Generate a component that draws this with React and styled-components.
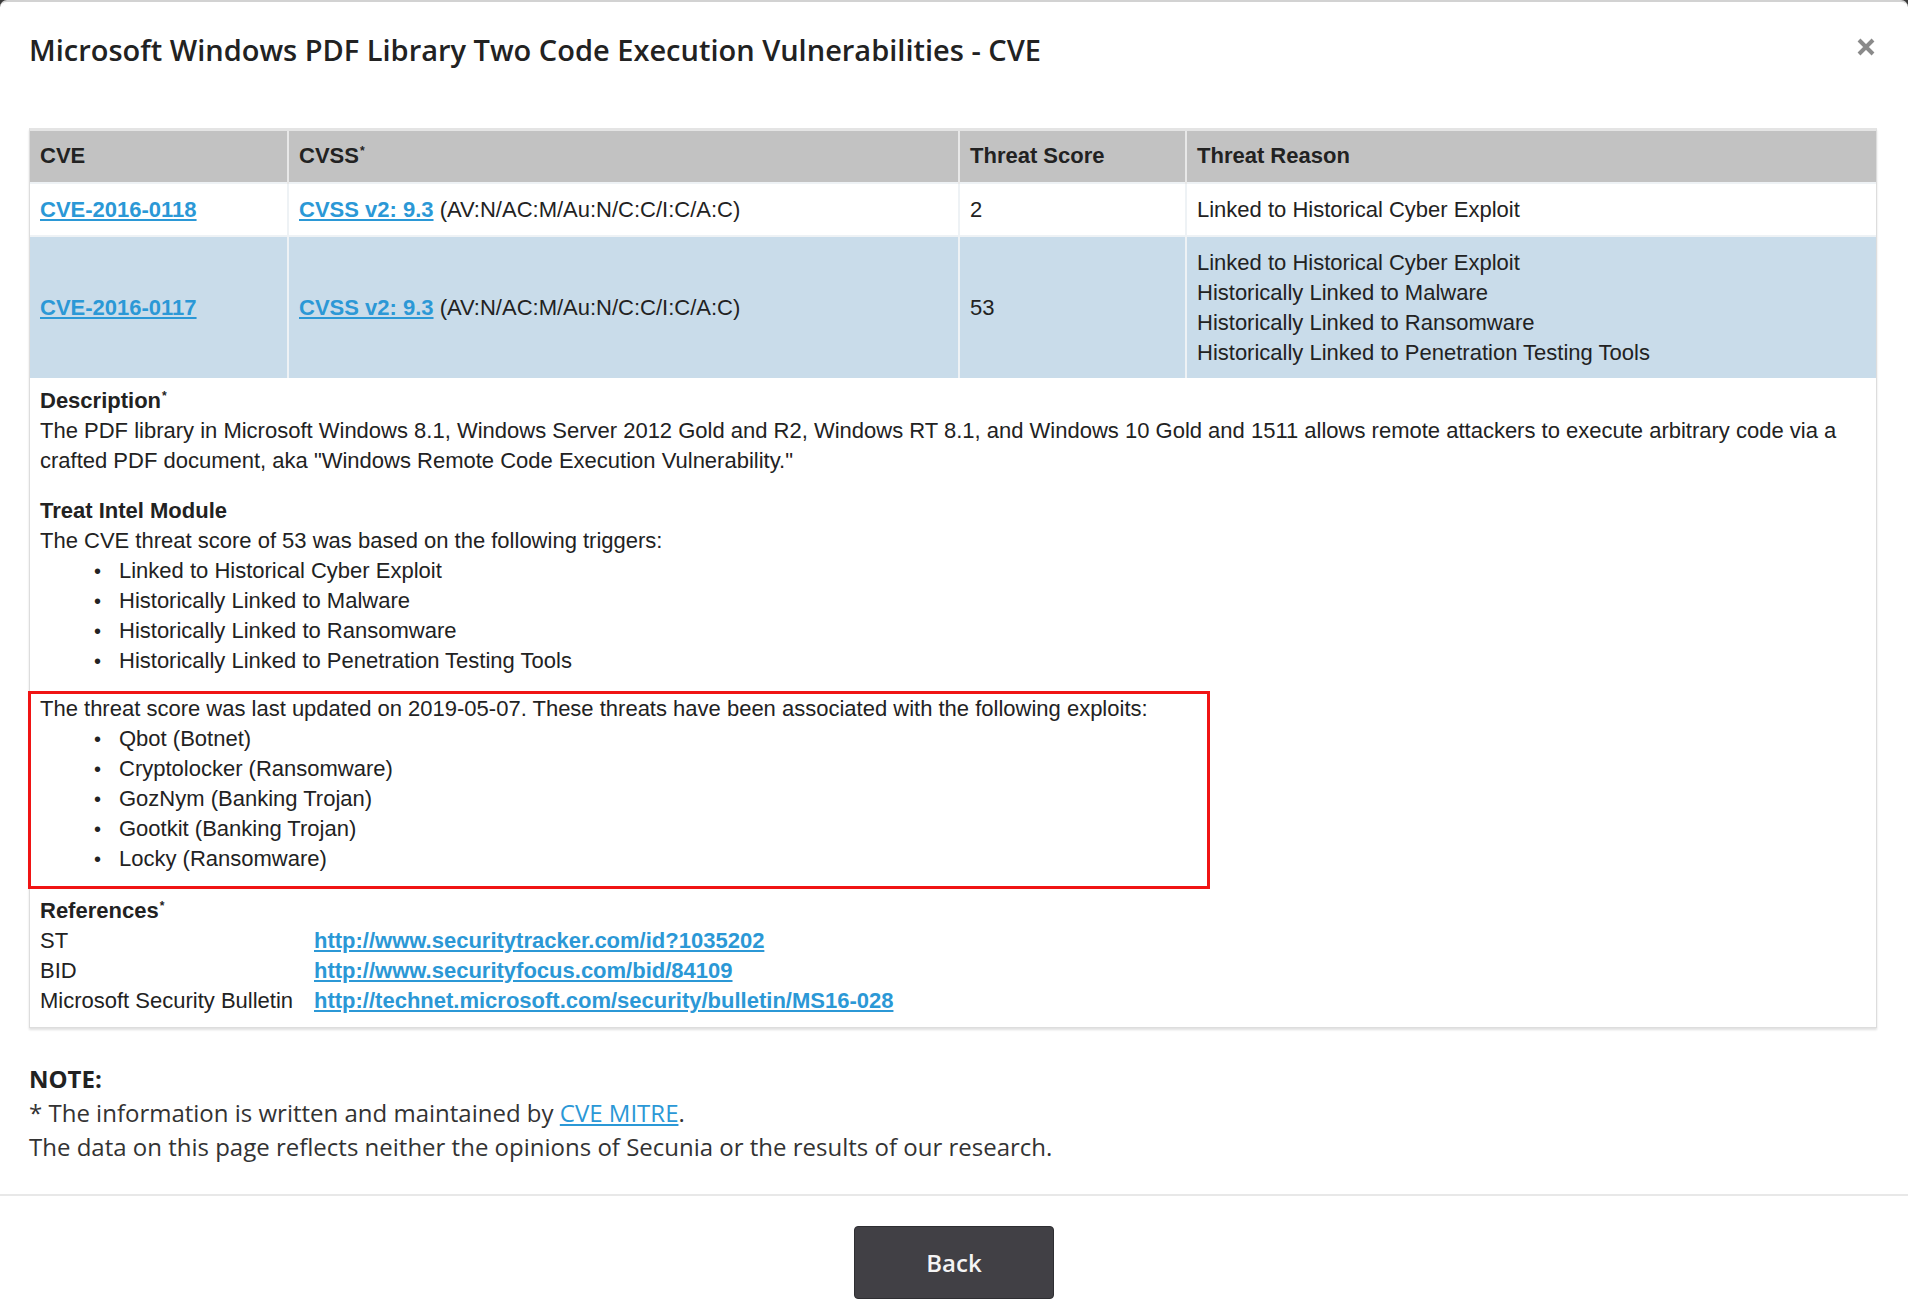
import styled, { createGlobalStyle } from "styled-components";

const GlobalStyle = createGlobalStyle`
    body {
        margin: 0;
        background: #3a3a3a;
    }
`

const rows = [
    {
        cve: "CVE-2016-0118",
        vector: "(AV:N/AC:M/Au:N/C:C/I:C/A:C)",
        score: "2",
        reasons: ["Linked to Historical Cyber Exploit"],
    },
    {
        cve: "CVE-2016-0117",
        vector: "(AV:N/AC:M/Au:N/C:C/I:C/A:C)",
        score: "53",
        reasons: [
            "Linked to Historical Cyber Exploit",
            "Historically Linked to Malware",
            "Historically Linked to Ransomware",
            "Historically Linked to Penetration Testing Tools",
        ],
        highlight: true,
    },
];

const triggers = [
    "Linked to Historical Cyber Exploit",
    "Historically Linked to Malware",
    "Historically Linked to Ransomware",
    "Historically Linked to Penetration Testing Tools",
];

const exploits = [
    "Qbot (Botnet)",
    "Cryptolocker (Ransomware)",
    "GozNym (Banking Trojan)",
    "Gootkit (Banking Trojan)",
    "Locky (Ransomware)",
];

const references = [
    { source: "ST", url: "http://www.securitytracker.com/id?1035202" },
    { source: "BID", url: "http://www.securityfocus.com/bid/84109" },
    { source: "Microsoft Security Bulletin", url: "http://technet.microsoft.com/security/bulletin/MS16-028" },
];

export default function App(){
    return(
        <>
            <GlobalStyle />
            <Modal>
                <Header>
                    <Title>Microsoft Windows PDF Library Two Code Execution Vulnerabilities - CVE</Title>
                    <CloseButton type="button" aria-label="Close">
                        <svg width="18" height="18" viewBox="0 0 18 18">
                            <path d="M2 2 L16 16 M16 2 L2 16" stroke="#8a8a8a" strokeWidth="4" />
                        </svg>
                    </CloseButton>
                </Header>

                <Body>
                    <Panel>
                        <Table>
                            <colgroup>
                                <col style={{ width: 258 }} />
                                <col style={{ width: 671 }} />
                                <col style={{ width: 227 }} />
                                <col />
                            </colgroup>
                            <thead>
                                <tr>
                                    <Th>CVE</Th>
                                    <Th>CVSS<Star>*</Star></Th>
                                    <Th>Threat Score</Th>
                                    <Th>Threat Reason</Th>
                                </tr>
                            </thead>
                            <tbody>
                                {rows.map(row => (
                                    <Tr key={row.cve} $highlight={row.highlight}>
                                        <Td><Link href="#">{row.cve}</Link></Td>
                                        <Td><Link href="#">CVSS v2: 9.3</Link> {row.vector}</Td>
                                        <Td>{row.score}</Td>
                                        <Td>
                                            {row.reasons.map(r => <div key={r}>{r}</div>)}
                                        </Td>
                                    </Tr>
                                ))}
                            </tbody>
                        </Table>

                        <Details>
                            <Section>
                                <Heading>Description<Star>*</Star></Heading>
                                <p>
                                    The PDF library in Microsoft Windows 8.1, Windows Server 2012 Gold and R2, Windows RT 8.1, and Windows 10 Gold and 1511 allows remote attackers to execute arbitrary code via a crafted PDF document, aka "Windows Remote Code Execution Vulnerability."
                                </p>
                            </Section>

                            <Section>
                                <Heading>Treat Intel Module</Heading>
                                <p>The CVE threat score of 53 was based on the following triggers:</p>
                                <BulletList>
                                    {triggers.map(t => <li key={t}>{t}</li>)}
                                </BulletList>
                            </Section>

                            <Highlight>
                                <p>The threat score was last updated on 2019-05-07. These threats have been associated with the following exploits:</p>
                                <BulletList>
                                    {exploits.map(x => <li key={x}>{x}</li>)}
                                </BulletList>
                            </Highlight>

                            <Section>
                                <Heading>References<Star>*</Star></Heading>
                                <RefGrid>
                                    {references.map(ref => (
                                        <RefRow key={ref.source}>
                                            <span>{ref.source}</span>
                                            <Link href="#">{ref.url}</Link>
                                        </RefRow>
                                    ))}
                                </RefGrid>
                            </Section>
                        </Details>
                    </Panel>

                    <Note>
                        <NoteTitle>NOTE:</NoteTitle>
                        <div>* The information is written and maintained by <NoteLink href="#">CVE MITRE</NoteLink>.</div>
                        <div>The data on this page reflects neither the opinions of Secunia or the results of our research.</div>
                    </Note>
                </Body>

                <Footer>
                    <BackButton type="button">Back</BackButton>
                </Footer>
            </Modal>
        </>
    )
}

const Modal = styled.div`
    min-height: 100vh;
    box-sizing: border-box;
    background: #FFFFFF;
    border-top: 2px solid #d2d2d2;
    border-radius: 7px 7px 0 0;
    display: flex;
    flex-direction: column;
`

const Header = styled.header`
    display: flex;
    justify-content: space-between;
    align-items: flex-start;
    padding: 29px 33px 0 29px;
    height: 97px;
`

const Title = styled.h1`
    margin: 0;
    font-family: 'Open Sans', sans-serif;
    font-weight: 600;
    font-size: 29px;
    line-height: 38px;
    color: #222222;
`

const CloseButton = styled.button`
    border: none;
    background: none;
    padding: 0;
    margin-top: 7px;
    cursor: pointer;
    display: flex;
`

const Body = styled.main`
    padding: 0 31px 0 29px;
`

const Panel = styled.section`
    border: 1px solid #dddddd;
    border-top: 3px solid #e4e4e4;
    box-shadow: 0 2px 2px rgba(0, 0, 0, 0.12);
    font-family: 'Liberation Sans', Arial, sans-serif;
    font-size: 22px;
    line-height: 30px;
    color: #222222;
`

const Table = styled.table`
    width: 100%;
    border-collapse: collapse;
    table-layout: fixed;
`

const Th = styled.th`
    background: #c2c2c2;
    text-align: left;
    font-weight: bold;
    padding: 10px 10px 11px 10px;
    border-left: 2px solid #e8e8e8;

    &:first-child {
        border-left: none;
    }
`

const Tr = styled.tr`
    background: ${p => p.$highlight ? "#c9dcea" : "#FFFFFF"};
    border-top: 2px solid #eef2f5;
`

const Td = styled.td`
    padding: 11px 10px 10px 10px;
    vertical-align: middle;
    border-left: 2px solid #eef2f5;

    &:first-child {
        border-left: none;
    }
`

const Star = styled.sup`
    font-size: 12px;
    line-height: 0;
    vertical-align: 8px;
    margin-left: 1px;
`

const Link = styled.a`
    color: #2b98d6;
    font-weight: bold;
    text-decoration: underline;
`

const Details = styled.div`
    padding: 8px 10px 11px 10px;

    p {
        margin: 0;
    }
`

const Section = styled.div`
    & + & {
        margin-top: 20px;
    }
`

const Heading = styled.div`
    font-weight: bold;
`

const BulletList = styled.ul`
    margin: 0;
    padding-left: 79px;
    list-style: none;

    li {
        position: relative;
    }

    li::before {
        content: "•";
        position: absolute;
        left: -25px;
        font-size: 20px;
    }
`

const Highlight = styled.div`
    width: 1182px;
    box-sizing: border-box;
    margin: 15px 0 7px -12px;
    padding: 0 0 12px 9px;
    border: 3px solid #f01414;
`

const RefGrid = styled.div`
    display: flex;
    flex-direction: column;
`

const RefRow = styled.div`
    display: grid;
    grid-template-columns: 274px 1fr;
`

const Note = styled.div`
    padding: 34px 0 30px 0;
    font-family: 'Open Sans', sans-serif;
    font-size: 24px;
    line-height: 34px;
    color: #333333;
`

const NoteTitle = styled.div`
    font-weight: bold;
    color: #222222;
`

const NoteLink = styled.a`
    color: #2b98d6;
    text-decoration: underline;
`

const Footer = styled.footer`
    border-top: 2px solid #e8e8e8;
    display: flex;
    justify-content: center;
    padding: 30px 0 40px 0;
`

const BackButton = styled.button`
    width: 200px;
    height: 73px;
    background: #414045;
    border: 1px solid #2e2e32;
    border-radius: 4px;
    color: #f4f4f4;
    font-family: 'Open Sans', sans-serif;
    font-weight: 600;
    font-size: 24px;
    cursor: pointer;
`
